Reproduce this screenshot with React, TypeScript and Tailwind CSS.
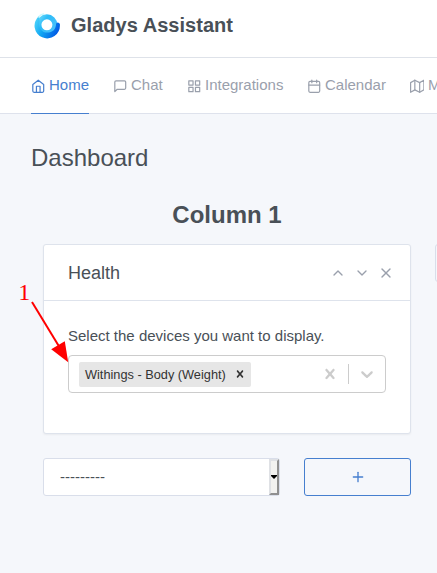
import React from 'react';
import { FiHome, FiMessageSquare, FiGrid, FiCalendar, FiMap, FiChevronUp, FiChevronDown, FiX, FiPlus } from 'react-icons/fi';

const CROSS =
  'M14.348 14.849c-0.469 0.469-1.229 0.469-1.697 0l-2.651-3.030-2.651 3.029c-0.469 0.469-1.229 0.469-1.697 0-0.469-0.469-0.469-1.229 0-1.697l2.758-3.15-2.759-3.152c-0.469-0.469-0.469-1.228 0-1.697s1.228-0.469 1.697 0l2.652 3.031 2.651-3.031c0.469-0.469 1.228-0.469 1.697 0s0.469 1.229 0 1.697l-2.758 3.152 2.758 3.15c0.469 0.469 0.469 1.229 0 1.698z';
const DOWN =
  'M4.516 7.548c0.436-0.446 1.043-0.481 1.576 0l3.908 3.747 3.908-3.747c0.533-0.481 1.141-0.446 1.574 0 0.436 0.445 0.408 1.197 0 1.615-0.406 0.418-4.695 4.502-4.695 4.502-0.217 0.223-0.502 0.335-0.787 0.335s-0.57-0.112-0.789-0.335c0 0-4.287-4.084-4.695-4.502s-0.436-1.17 0-1.615z';

function Logo() {
  return (
    <svg className="mt-[11px] h-[30px] w-[30px] shrink-0" viewBox="0 0 30 30">
      <defs>
        <linearGradient id="ring" x1="2" y1="6" x2="28" y2="18" gradientUnits="userSpaceOnUse">
          <stop offset="0" stopColor="#5adcfc" />
          <stop offset="0.45" stopColor="#12a8f3" />
          <stop offset="1" stopColor="#0058e4" />
        </linearGradient>
        <linearGradient id="top" x1="5" y1="4" x2="23" y2="16" gradientUnits="userSpaceOnUse">
          <stop offset="0" stopColor="#7fe4fc" />
          <stop offset="0.45" stopColor="#2cbcf8" />
          <stop offset="1" stopColor="#45c0fa" />
        </linearGradient>
      </defs>
      <circle cx="14.9" cy="13.8" r="8" fill="none" stroke="url(#top)" strokeWidth="5" />
      <path d="M7 5 A12.7 12.7 0 1 0 27.9 14 A2 2 0 0 0 24.1 12.8 C23.8 19 20 21.8 15 21.6 C9 21.2 6 16 7.6 10.5Z" fill="url(#ring)" />
      <path d="M6.5 6 Q8.7 3.4 11.5 3" fill="none" stroke="#b9f5fc" strokeOpacity="0.7" strokeWidth="1.5" strokeLinecap="round" />
    </svg>
  );
}

function NavItem({ icon: Icon, label, active = false, className }: { icon: React.ElementType; label: string; active?: boolean; className: string }) {
  return (
    <a className={`flex h-[56px] shrink-0 items-start whitespace-nowrap pt-4 ${active ? 'border-b border-[#467fcf] text-[#467fcf]' : 'text-[#9aa0ac]'} ${className}`}>
      <Icon className="-ml-[0.5px] mt-[5px] mr-1 h-[14.5px] w-[14.5px] shrink-0" />
      <span>{label}</span>
    </a>
  );
}

export default function App() {
  return (
    <div className="relative h-[573px] w-[437px] overflow-hidden bg-[#f5f7fb] font-['Liberation_Sans',Arial,sans-serif] text-[15px] leading-[22px] text-[#495057]">
      <header className="flex h-[58px] border-b border-[#dee2e9] bg-white pl-8">
        <Logo />
        <span className="ml-[9px] pt-[9px] text-[20px] leading-8 font-bold tracking-[0.03px]">Gladys Assistant</span>
      </header>
      <nav className="flex h-[56px] border-b border-[#dee2ec] bg-white pl-[31px]">
        <NavItem icon={FiHome} label="Home" active className="w-[58px]" />
        <NavItem icon={FiMessageSquare} label="Chat" className="ml-6 w-[50px]" />
        <NavItem icon={FiGrid} label="Integrations" className="ml-6 w-[97px]" />
        <NavItem icon={FiCalendar} label="Calendar" className="ml-[23px] w-[79px]" />
        <NavItem icon={FiMap} label="Maps" className="ml-6" />
      </nav>

      <main>
        <h1 className="mt-[26px] ml-[31px] text-[24px] leading-9 font-normal">Dashboard</h1>
        <div className="flex w-[600px] items-start gap-6 pt-[25px] pl-[43px]">
          <section className="w-[368px] shrink-0">
            <h2 className="h-[43px] text-center text-[24px] leading-[28px] font-bold">Column 1</h2>
            <article className="h-[190px] rounded-[3px] border border-[#dee3ec] bg-white shadow-[0_1px_2px_0_rgba(0,0,0,0.05)]">
              <div className="flex h-[56px] items-center justify-between border-b border-[#dee3ec] pr-[16px] pl-6">
                <h3 className="text-[18px] leading-[22px]">Health</h3>
                <div className="flex gap-[8px] text-[#9aa0ac]">
                  <FiChevronUp className="h-4 w-4" />
                  <FiChevronDown className="h-4 w-4" />
                  <FiX className="h-4 w-4" />
                </div>
              </div>
              <div className="px-6 pt-6">
                <label className="block h-[30px] leading-[22px]">Select the devices you want to display.</label>
                <div className="flex h-[38px] items-center rounded-[4px] border border-[#cccccc] pl-[10px]">
                  <div className="flex h-[25px] w-[172px] items-center rounded-[2px] bg-[#e6e6e6] pl-1.5 text-[12.75px] text-[#333333]">
                    <span className="pt-px whitespace-nowrap">Withings - Body (Weight)</span>
                    <svg className="ml-[7px] h-[14px] w-[14px] shrink-0 fill-current" viewBox="0 0 20 20"><path d={CROSS} /></svg>
                  </div>
                  <div className="ml-auto flex items-center text-[#cccccc]">
                    <svg className="h-5 w-5 fill-current" viewBox="0 0 20 20"><path d={CROSS} /></svg>
                    <span className="mx-2 h-5 w-px bg-[#cccccc]" />
                    <svg className="mr-2 h-5 w-5 fill-current" viewBox="0 0 20 20"><path d={DOWN} /></svg>
                  </div>
                </div>
              </div>
            </article>
            <div className="mt-6 flex justify-between">
              <div className="flex h-[38px] w-[237px] items-center rounded-[3px] border border-[#d9deea] bg-white pl-4">
                <span>---------</span>
                <span className="ml-auto flex h-[36px] w-[10px] items-center justify-center border-2 border-t-[#dfe1e5] border-r-[#909090] border-b-[#909090] border-l-[#dfe1e5] bg-[#f2f2f0]">
                  <svg className="h-[4px] w-[6px] shrink-0" viewBox="0 0 6 4"><path d="M0 0H6V1L3 4L0 1Z" fill="#000" /></svg>
                </span>
              </div>
              <button className="flex h-[38px] w-[107px] items-center justify-center rounded-[3px] border border-[#467fcf] text-[#467fcf]">
                <FiPlus className="h-4 w-4" />
              </button>
            </div>
          </section>
          <aside className="mt-[43px] h-[38px] w-[150px] shrink-0 rounded-[3px] border border-[#d9deea]" />
        </div>
      </main>

      <svg className="absolute top-[280px] left-0 h-[90px] w-[80px]" viewBox="0 0 80 90">
        <text x="18.3" y="20" fontFamily="Liberation Serif" fontSize="24" fill="#ff0000">1</text>
        <path d="M32 22L60 68" stroke="#ff0000" strokeWidth="2" />
        <path d="M68.2 82.3L51.2 69.3L64.8 61.3Z" fill="#ff0000" />
      </svg>
    </div>
  );
}
